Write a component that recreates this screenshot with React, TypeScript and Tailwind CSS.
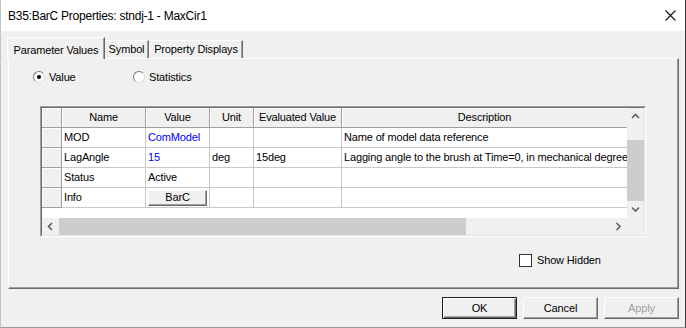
import React from "react";

type Row = {
  name: string;
  value?: string;
  blue?: boolean;
  button?: boolean;
  unit?: string;
  evaluated?: string;
  description?: string;
};

const rows: Row[] = [
  { name: "MOD", value: "ComModel", blue: true, description: "Name of model data reference" },
  {
    name: "LagAngle",
    value: "15",
    blue: true,
    unit: "deg",
    evaluated: "15deg",
    description: "Lagging angle to the brush at Time=0, in mechanical degrees",
  },
  { name: "Status", value: "Active" },
  { name: "Info", value: "BarC", button: true },
];

const cols = [
  { label: "Name", w: "w-[84px]" },
  { label: "Value", w: "w-[64px]" },
  { label: "Unit", w: "w-[44px]" },
  { label: "Evaluated Value", w: "w-[88px]" },
  { label: "Description", w: "w-[286px]" },
];

function Chevron({ dir }: { dir: "up" | "down" | "left" | "right" }) {
  const d = {
    up: "M1 5 L4.5 1.5 L8 5",
    down: "M1 1.5 L4.5 5 L8 1.5",
    left: "M5 1 L1.5 4.5 L5 8",
    right: "M1.5 1 L5 4.5 L1.5 8",
  }[dir];
  const vertical = dir === "up" || dir === "down";
  return (
    <svg
      width={vertical ? 9 : 7}
      height={vertical ? 7 : 9}
      viewBox={vertical ? "0 0 9 7" : "0 0 7 9"}
      fill="none"
    >
      <path d={d} stroke="#606060" strokeWidth="1.6" />
    </svg>
  );
}

function HeaderCell({ className, children }: { className: string; children?: React.ReactNode }) {
  return (
    <div
      className={`${className} h-[20px] shrink-0 flex items-center justify-center bg-[#f0f0f0] border-r border-b border-[#a0a0a0] shadow-[inset_1px_1px_0_#ffffff]`}
    >
      {children}
    </div>
  );
}

function Radio({ checked, label }: { checked?: boolean; label: string }) {
  return (
    <div className="flex items-center gap-[4px]">
      <div className="w-[12px] h-[12px] rounded-full bg-white border border-t-[#7a7a7a] border-l-[#7a7a7a] border-r-[#dcdcdc] border-b-[#dcdcdc] flex items-center justify-center">
        {checked && <div className="w-[4px] h-[4px] rounded-full bg-black" />}
      </div>
      <span>{label}</span>
    </div>
  );
}

export default function App() {
  return (
    <div className="w-[686px] h-[328px] overflow-hidden bg-[#f0f0f0] border-l border-l-[#c4c4c4] border-r border-r-[#3c3c3c] border-b border-b-[#9a9a9a] flex flex-col text-[11px] tracking-[-0.15px] text-black font-['Liberation_Sans',Arial,sans-serif]">
      {/* title bar */}
      <div className="h-[31px] shrink-0 bg-white flex items-center justify-between pl-[7px] pr-[9px]">
        <span className="text-[12px] tracking-[-0.25px]">B35:BarC Properties: stndj-1 - MaxCir1</span>
        <svg width="11" height="11" viewBox="0 0 11 11">
          <path d="M0.5 0.5 L10.5 10.5 M10.5 0.5 L0.5 10.5" stroke="#111" strokeWidth="1.1" />
        </svg>
      </div>

      {/* tabs */}
      <div className="mt-[6px] pl-[6px] h-[21px] flex items-end">
        <div className="relative z-10 w-[98px] h-[22px] mb-[-1px] bg-[#f0f0f0] border-t border-l border-white border-r border-r-[#696969] shadow-[inset_-1px_0_0_#a0a0a0] flex items-start justify-center pt-[4px]">
          Parameter Values
        </div>
        <div className="w-[44px] h-[18px] bg-[#f0f0f0] border-t border-white border-r border-r-[#696969] shadow-[inset_-1px_0_0_#a0a0a0] flex items-center justify-center">
          Symbol
        </div>
        <div className="w-[94px] h-[18px] bg-[#f0f0f0] border-t border-l border-white border-r border-r-[#696969] shadow-[inset_-1px_0_0_#a0a0a0] flex items-center justify-center">
          Property Displays
        </div>
      </div>

      {/* tab panel */}
      <div className="ml-[7px] w-[671px] h-[231px] shrink-0 border-t border-l border-white border-r border-b border-r-[#696969] border-b-[#696969] shadow-[inset_-1px_-1px_0_#a0a0a0] flex flex-col">
        <div className="mt-[12px] ml-[24px] h-[12px] flex items-center">
          <div className="w-[100px]">
            <Radio checked label="Value" />
          </div>
          <Radio label="Statistics" />
        </div>

        {/* grid */}
        <div className="mt-[23px] ml-[31px] w-[606px] h-[131px] border border-t-[#a0a0a0] border-l-[#a0a0a0] border-r-white border-b-white">
          <div className="w-full h-full border border-t-[#696969] border-l-[#696969] border-r-[#e3e3e3] border-b-[#e3e3e3] flex flex-col">
            <div className="flex h-[110px]">
              <div className="flex-1 bg-white overflow-hidden">
                <div className="flex">
                  <HeaderCell className="w-[20px]" />
                  {cols.map((c) => (
                    <HeaderCell key={c.label} className={c.w}>
                      {c.label}
                    </HeaderCell>
                  ))}
                </div>
                {rows.map((r) => (
                  <div key={r.name} className="flex h-[20px]">
                    <div className="w-[20px] h-[20px] shrink-0 bg-[#f0f0f0] border-r border-b border-[#a0a0a0] shadow-[inset_1px_1px_0_#ffffff]" />
                    <div className="w-[84px] shrink-0 border-r border-b border-[#c8c8c8] px-[2px] flex items-center">
                      {r.name}
                    </div>
                    <div
                      className={`w-[64px] shrink-0 border-r border-b border-[#c8c8c8] px-[2px] flex items-center ${
                        r.blue ? "text-[#0000ff]" : ""
                      }`}
                    >
                      {r.button ? (
                        <div className="w-[60px] h-[16px] bg-[#f0f0f0] border border-t-white border-l-white border-r-[#696969] border-b-[#696969] shadow-[inset_-1px_-1px_0_#a0a0a0] flex items-center justify-center">
                          {r.value}
                        </div>
                      ) : (
                        r.value
                      )}
                    </div>
                    <div className="w-[44px] shrink-0 border-r border-b border-[#c8c8c8] px-[2px] flex items-center">
                      {r.unit}
                    </div>
                    <div className="w-[88px] shrink-0 border-r border-b border-[#c8c8c8] px-[2px] flex items-center">
                      {r.evaluated}
                    </div>
                    <div className="w-[286px] shrink-0 border-r border-b border-[#c8c8c8] px-[2px] flex items-center whitespace-nowrap overflow-hidden">
                      {r.description}
                    </div>
                  </div>
                ))}
              </div>
              {/* vertical scrollbar */}
              <div className="w-[17px] bg-[#f0f0f0] flex flex-col">
                <div className="h-[17px] flex items-center justify-center">
                  <Chevron dir="up" />
                </div>
                <div className="mt-[15px] h-[62px] bg-[#cdcdcd]" />
                <div className="flex-1" />
                <div className="h-[17px] flex items-center justify-center">
                  <Chevron dir="down" />
                </div>
              </div>
            </div>
            {/* horizontal scrollbar */}
            <div className="flex h-[17px]">
              <div className="flex-1 bg-[#f0f0f0] flex">
                <div className="w-[17px] flex items-center justify-center">
                  <Chevron dir="left" />
                </div>
                <div className="w-[407px] bg-[#cdcdcd]" />
                <div className="flex-1" />
                <div className="w-[17px] flex items-center justify-center">
                  <Chevron dir="right" />
                </div>
              </div>
              <div className="w-[17px] bg-[#f0f0f0]" />
            </div>
          </div>
        </div>

        {/* show hidden */}
        <div className="mt-[15px] ml-[510px] flex items-center gap-[5px]">
          <div className="w-[13px] h-[13px] bg-white border border-[#333333]" />
          <span>Show Hidden</span>
        </div>
      </div>

      {/* buttons */}
      <div className="mt-[8px] pr-[6px] flex justify-end gap-[6px]">
        <div className="w-[75px] h-[22px] bg-[#f0f0f0] border border-[#1e1e1e] shadow-[inset_1px_1px_0_#ffffff,inset_-1px_-1px_0_#696969,inset_-2px_-2px_0_#a0a0a0] flex items-center justify-center">
          OK
        </div>
        <div className="w-[75px] h-[22px] bg-[#f0f0f0] border border-t-white border-l-white border-r-[#696969] border-b-[#696969] shadow-[inset_-1px_-1px_0_#a0a0a0] flex items-center justify-center">
          Cancel
        </div>
        <div className="w-[75px] h-[22px] bg-[#f0f0f0] border border-t-white border-l-white border-r-[#696969] border-b-[#696969] shadow-[inset_-1px_-1px_0_#a0a0a0] flex items-center justify-center text-[#a0a0a0]">
          Apply
        </div>
      </div>
    </div>
  );
}
